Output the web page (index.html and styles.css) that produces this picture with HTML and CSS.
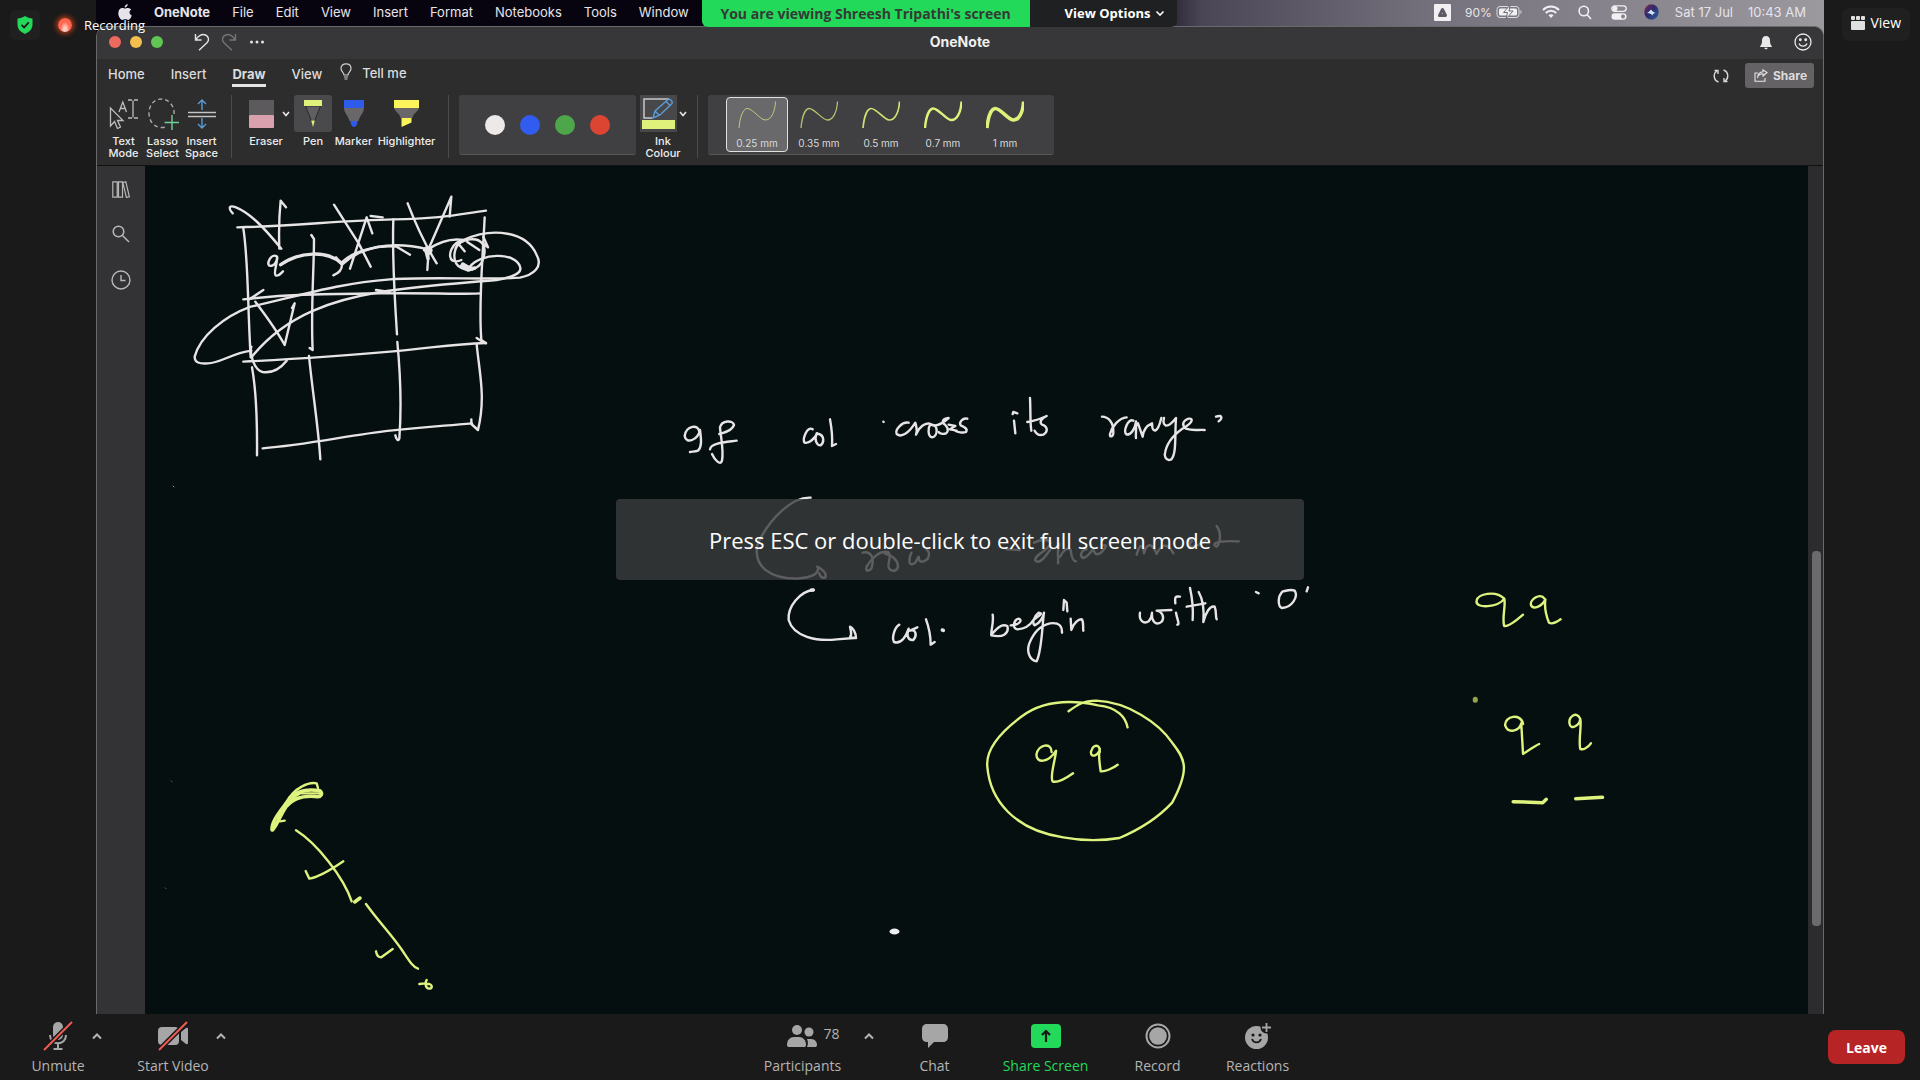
FILE: index.html
```html
<!DOCTYPE html>
<html lang="en">
<head>
<meta charset="utf-8">
<title>Meeting – shared screen</title>
<link rel="stylesheet" href="styles.css">
</head>
<body>
<div class="meeting">
  <main class="stage">
    <aside class="rail rail-left">
      <button class="shield" aria-label="Meeting is encrypted">
        <svg width="18" height="20" viewBox="0 0 18 20"><path d="M9 1c2.300 1.600 4.700 2.400 7.500 2.600v6c0 4.500-3 7.400-7.500 9.400-4.500-2-7.500-4.900-7.500-9.400v-6C4.300 3.400 6.700 2.600 9 1z" fill="#23d959"/><path d="M5.500 9.800l2.600 2.600 4.700-5" fill="none" stroke="#1a1a1a" stroke-width="1.800"/></svg>
      </button>
      <span class="rec-dot"></span>
      <span class="rec-label">Recording</span>
    </aside>

    <section class="shared">
      <nav class="menubar">
        <div class="menus">
          <button class="apple" aria-label="Apple menu"><svg width="14" height="17" viewBox="0 0 14 17" fill="#e6e4ea"><path d="M9.700 0c.2 1.700-1.300 3.600-3 3.500C6.500 1.900 8 .2 9.700 0zM7 4.600c.7 0 1.700-.8 3.200-.7 1.200.1 2.300.6 3 1.600-2.500 1.600-2.100 4.900.6 6-.7 1.900-2 4.400-3.600 4.400-1.100 0-1.500-.7-2.900-.7s-1.900.7-2.900.7C2.600 16 .3 12.500.3 9.200c0-3.300 2-5.200 4.100-5.200 1.200 0 2 .6 2.600.6z"/></svg></button>
          <button class="bold">OneNote</button><button>File</button><button>Edit</button><button>View</button><button>Insert</button><button>Format</button><button>Notebooks</button><button>Tools</button><button>Window</button>
        </div>
        <div class="banner">
          <span class="viewing">You are viewing Shreesh Tripathi's screen</span>
          <button class="view-options">View Options <svg width="10" height="7" viewBox="0 0 10 7" fill="none" stroke="#fff" stroke-width="1.600"><path d="M1.500 1.500L5 5l3.500-3.500"/></svg></button>
        </div>
        <div class="status">
          <svg class="drive" width="17" height="17" viewBox="0 0 17 17"><rect width="17" height="17" rx="1" fill="#f1f0f3"/><path d="M8.500 5.500l3 6h-6z" fill="none" stroke="#5d5a64" stroke-width="3" stroke-linejoin="round"/></svg>
          <span class="battery-pct">90%</span>
          <svg class="battery" width="27" height="14" viewBox="0 0 27 14"><rect x="1" y="1.500" width="22" height="11" rx="3" fill="none" stroke="#dcdae0" /><rect x="3" y="3.500" width="18" height="7" rx="1.500" fill="#f1f0f3"/><path d="M14 0L7.500 7.500h4L10 14l7-8h-4z" fill="#f1f0f3" stroke="#6f6c76"/><path d="M24.500 5v4c1.500-.5 1.500-3.500 0-4z" fill="#dcdae0"/></svg>
          <svg class="wifi" width="18" height="14" viewBox="0 0 18 14" fill="none" stroke="#f1f0f3" stroke-width="2"><path d="M1 5c4.600-4.600 11.400-4.600 16 0M3.800 8c3-3 7.400-3 10.400 0"/><path d="M6.500 10.200c1.500-1.400 3.500-1.400 5 0L9 13z" fill="#f1f0f3" stroke="none"/></svg>
          <svg class="lens" width="14" height="15" viewBox="0 0 14 15" fill="none" stroke="#f1f0f3" stroke-width="1.600"><circle cx="5.800" cy="6" r="4.700"/><path d="M9 9.500l4 4.500"/></svg>
          <svg class="control" width="16" height="15" viewBox="0 0 16 15"><rect x=".8" y=".8" width="14.400" height="5.600" rx="2.800" fill="none" stroke="#f1f0f3" stroke-width="1.300"/><circle cx="4" cy="3.600" r="2.500" fill="#f1f0f3"/><rect x=".5" y="8.300" width="15" height="6.500" rx="3.200" fill="#f1f0f3"/><circle cx="12" cy="11.500" r="2" fill="#85828b"/></svg>
          <svg class="siri" width="15" height="16" viewBox="0 0 15 16"><defs><linearGradient id="siri" x1="0" y1="0" x2="1" y2="1"><stop offset="0" stop-color="#8a2350"/><stop offset=".45" stop-color="#2b2a6a"/><stop offset="1" stop-color="#2e63a8"/></linearGradient></defs><ellipse cx="7.500" cy="8" rx="7.200" ry="7.700" fill="url(#siri)"/><path d="M3 9c2-1 3-2.500 4-3.500 1 1.500 2.500 2.500 4.500 3.500-2 0-2.500 1-3 2.500-1-1.500-3-2.500-5.500-2.500z" fill="#cfe4f5"/></svg>
          <span class="clock"><span>Sat 17 Jul</span><span>10:43 AM</span></span>
        </div>
      </nav>

      <div class="window">
        <header class="titlebar">
          <div class="title-left">
            <span class="light red"></span><span class="light amber"></span><span class="light green"></span>
            <button class="undo" aria-label="Undo"><svg width="16" height="18" viewBox="0 0 16 18" fill="none" stroke="#e4e4e4" stroke-width="1.400"><path d="M1.500 1v6h6M1.800 6.800C4 2.500 8 .6 11.500 2c3.600 1.800 3.800 5.300 1.500 7.800L5 17.300"/></svg></button>
            <button class="redo" aria-label="Redo"><svg width="16" height="18" viewBox="0 0 16 18" fill="none" stroke="#747476" stroke-width="1.400"><path d="M14.500 1v6h-6M14.200 6.800C12 2.500 8 .6 4.500 2 .9 3.800.7 7.300 3 9.800l8 7.500"/></svg></button>
            <button class="more" aria-label="More"><svg width="16" height="4" viewBox="0 0 16 4" fill="#e4e4e4"><circle cx="2.500" cy="2" r="1.500"/><circle cx="8" cy="2" r="1.500"/><circle cx="13.500" cy="2" r="1.500"/></svg></button>
          </div>
          <h1 class="app-title">OneNote</h1>
          <div class="title-right">
            <button aria-label="Notifications"><svg width="14" height="15" viewBox="0 0 14 15" fill="#e8e8e8"><path d="M7 1c2.500 0 4 1.800 4 4.200 0 3 .4 4.500 1.800 5.800v1H1.200v-1C2.600 9.700 3 8.200 3 5.200 3 2.800 4.500 1 7 1zM5.300 12.800h3.400c-.3 2-3.100 2-3.400 0z"/></svg></button>
            <button aria-label="Feedback"><svg width="18" height="18" viewBox="0 0 18 18" fill="none" stroke="#e8e8e8" stroke-width="1.300"><circle cx="9" cy="9" r="8"/><path d="M5 10.500c1.500 3.500 6.500 3.500 8 0"/><circle cx="6.300" cy="6.800" r=".8" fill="#e8e8e8"/><circle cx="11.700" cy="6.800" r=".8" fill="#e8e8e8"/></svg></button>
          </div>
        </header>

        <div class="tabs">
          <button class="tab">Home</button><button class="tab">Insert</button><button class="tab active">Draw</button><button class="tab">View</button>
          <button class="tab tell"><svg width="12" height="17" viewBox="0 0 12 17" fill="none" stroke="#d0d0d0" stroke-width="1.200"><path d="M4 12c0-2.500-3-3.300-3-6.500C1 2.600 3.200.8 6 .8s5 1.800 5 4.700C11 8.700 8 9.500 8 12zM4 14h4M4.500 16h3"/></svg>Tell me</button>
          <div class="tabs-right">
            <button aria-label="Sync"><svg width="16" height="16" viewBox="0 0 16 16" fill="none" stroke="#d8d8d8" stroke-width="1.400"><path d="M5.500 14C0 12 .2 5.500 4 2.800M10.500 2C16 4 15.800 10.500 12 13.200"/><path d="M1.500 2.500h3.500v3.500M14.500 13.500H11V10"/></svg></button>
            <button class="share"><svg width="14" height="13" viewBox="0 0 14 13" fill="none" stroke="#e6e6e6" stroke-width="1.100"><path d="M4 4H1v8.300h10V9M3.500 9C4 6 6 4.800 9 4.800V7l4-3.500L9 .8v2C5.500 3 3.800 5.500 3.500 9z"/></svg>Share</button>
          </div>
        </div>

        <div class="ribbon">
          <div class="group">
            <button class="tool"><span class="glyph"><svg width="30" height="30" viewBox="0 0 30 30" fill="none" stroke="#bdbdbd" stroke-width="1.300"><path d="M1.500 9v18l4-4.500 3 7 3-1.500-3-6.500h5.500zM10 13l3.800-10L17.500 13M11.200 9.500h5"/><path d="M19 1h4M25 1h4M19 19h4M25 19h4M24 1.500v17" /></svg></span>Text<br>Mode</button>
            <button class="tool"><span class="glyph"><svg width="32" height="32" viewBox="0 0 32 32" fill="none" stroke-width="1.400"><path d="M27 16C28 9 22 1 14.500 1 7 1 2 7 2 15.500 2 23 7 29.500 15 29.500c2.500 0 4-.5 5-1.500" stroke="#a9a9a9" stroke-dasharray="4 3"/><path d="M17.500 24.500H32M25 17v15" stroke="#6fcf97"/></svg></span>Lasso<br>Select</button>
            <button class="tool"><span class="glyph"><svg width="28" height="30" viewBox="0 0 28 30" fill="none" stroke-width="1.400"><path d="M0 13.500h28M0 17.500h28" stroke="#c4c4c4"/><path d="M14 11V1M10 5l4-4 4 4M14 19v10M10 25l4 4 4-4" stroke="#5b9bd8"/></svg></span>Insert<br>Space</button>
          </div>
          <span class="sep"></span>
          <div class="group">
            <button class="tool split"><span class="split-row"><span class="split-tile"><svg width="25" height="28" viewBox="0 0 25 28"><rect width="25" height="15" fill="#5d5a5e"/><rect y="15" width="25" height="13" rx="1" fill="#d9a0ae"/></svg></span><svg width="8" height="6" viewBox="0 0 8 6" fill="none" stroke="#e6e6e6" stroke-width="1.600"><path d="M1 1l3 3.500L7 1"/></svg></span>Eraser</button>
            <button class="tool pen"><span class="glyph picked"><svg width="20" height="28" viewBox="0 0 20 28"><path d="M2.500 6h15L11.500 21h-3z" fill="#605e61" stroke="#29292a"/><rect x="1" width="18" height="6" fill="#dff17b"/><path d="M8.200 20.500h3.600L10 27z" fill="#dff17b"/></svg></span>Pen</button>
            <button class="tool marker"><span class="glyph"><svg width="20" height="28" viewBox="0 0 20 28"><path d="M0 8h20c0 5-4 7-5.500 13h-9C4 15 0 13 0 8z" fill="#69676a"/><rect width="20" height="8" fill="#2f5bea"/><path d="M6.500 21h7c0 3-1.500 6-3.500 6s-3.500-3-3.500-6z" fill="#2f5bea"/></svg></span>Marker</button>
            <button class="tool highlighter"><span class="glyph"><svg width="25" height="28" viewBox="0 0 25 28"><path d="M0 8h25c-1 4-6 5-6.500 10h-12C6 13 1 12 0 8z" fill="#69676a"/><rect width="25" height="8" fill="#fbf45b"/><path d="M7.500 18h10v4.500L7.500 27z" fill="#fbf45b"/></svg></span>Highlighter</button>
          </div>
          <span class="sep"></span>
          <div class="panel colours">
            <button class="swatch white" aria-label="White"></button><button class="swatch blue" aria-label="Blue"></button><button class="swatch green" aria-label="Green"></button><button class="swatch red" aria-label="Red"></button>
          </div>
          <button class="tool split ink"><span class="split-row"><span class="split-tile filled"><svg width="33" height="31" viewBox="0 0 33 31" fill="none"><path d="M27 1H2v19h8" stroke="#c8c8c8" stroke-width="1.500"/><path d="M11 20l2-7L26 1.500c2-1 5 1.500 4 4L18 17z M13 13l4.500 4.500M24 3.500l4.500 4.500" stroke="#5b9bd8" stroke-width="1.400"/><rect y="22" width="33" height="9" fill="#dff17b"/></svg></span><svg width="8" height="6" viewBox="0 0 8 6" fill="none" stroke="#e6e6e6" stroke-width="1.600"><path d="M1 1l3 3.500L7 1"/></svg></span>Ink<br>Colour</button>
          <span class="sep"></span>
          <div class="panel widths">
            <button class="nib selected"><svg viewBox="0 0 38 28" stroke="#bfca80" stroke-width="1"><path d="M1 27C2 16 5 8 9 7.500c5-.5 13 11 18 11.500 6 .5 10-8 10.500-18.500"/></svg>0.25 mm</button>
            <button class="nib"><svg viewBox="0 0 38 28" stroke="#b5c070" stroke-width="1.300"><path d="M1 27C2 16 5 8 9 7.500c5-.5 13 11 18 11.500 6 .5 10-8 10.500-18.500"/></svg>0.35 mm</button>
            <button class="nib"><svg viewBox="0 0 38 28" stroke="#d0e075" stroke-width="1.700"><path d="M1 27C2 16 5 8 9 7.500c5-.5 13 11 18 11.500 6 .5 10-8 10.500-18.500"/></svg>0.5 mm</button>
            <button class="nib"><svg viewBox="0 0 38 28" stroke="#dff17b" stroke-width="2.400"><path d="M1 27C2 16 5 8 9 7.500c5-.5 13 11 18 11.500 6 .5 10-8 10.500-18.500"/></svg>0.7 mm</button>
            <button class="nib"><svg viewBox="0 0 38 28" stroke="#dff17b" stroke-width="3.500"><path d="M1 27C2 16 5 8 9 7.500c5-.5 13 11 18 11.500 6 .5 10-8 10.500-18.500"/></svg>1 mm</button>
          </div>
        </div>

        <div class="workspace">
          <nav class="sidebar">
            <button aria-label="Notebooks"><svg width="18" height="17" viewBox="0 0 18 17" fill="none" stroke="#b8b8b8" stroke-width="1.200"><path d="M.8.800h4.400v15.400H.8zM6.500.8h4v15.400h-4zM10.800 1.500l3-.7 3.600 15-3 .6z"/></svg></button>
            <button aria-label="Search"><svg width="18" height="18" viewBox="0 0 18 18" fill="none" stroke="#b8b8b8" stroke-width="1.500"><circle cx="6.500" cy="6.500" r="5.300"/><path d="M10.500 10.500l6.500 6.500"/></svg></button>
            <button aria-label="Recent"><svg width="20" height="20" viewBox="0 0 20 20" fill="none" stroke="#b8b8b8" stroke-width="1.400"><circle cx="10" cy="10" r="9"/><path d="M10 5v5.500h4.500"/></svg></button>
          </nav>

          <div class="page">
            <svg class="inkwork" viewBox="0 0 1663 848" preserveAspectRatio="xMinYMin meet" role="img" aria-label="Handwritten notes">
              <!-- grid sketch -->
              <g class="white-ink" transform="translate(-55 -6) scale(.33333)">
                <path d="M442 202C600 200 760 180 910 178S1110 162 1188 152"/>
                <path d="M460 205C475 300 472 420 482 592M486 622C500 700 502 780 501 886"/>
                <path d="M664 225l8 12C672 330 662 450 668 570l-9-6M657 588C668 700 685 800 691 898"/>
                <path d="M910 178C906 300 915 430 921 523M922 546C932 650 935 740 928 836c-4 10-10 0-12-10"/>
                <path d="M1184 172C1178 300 1165 430 1174 540l14 10M1160 552C1168 640 1188 710 1164 810l-20-18v-14"/>
                <path d="M460 418C600 402 700 402 870 400S1080 404 1172 400"/>
                <path d="M460 605C640 596 760 588 900 575S1090 552 1188 549M1160 534l22 14"/>
                <path d="M518 865C650 855 780 825 900 812S1060 798 1146 790"/>
                <path d="M428 160c-16-20-8-24 10-18 40 16 80 56 136 124M568 266C566 210 568 160 572 122l16 20"/>
                <path d="M732 134L806 250 842 320M780 326L830 172l17 48M842 168l36 4"/>
                <path d="M953 130C980 200 1000 245 1040 310M1084 110L1012 275M1084 110l-5 60M1012 330l4-60"/>
                <path d="M562 296c0-12-14-12-22 0-10 16-4 26 8 20 12-4 14-22 13-26 2 20-12 50-4 56 8 4 16-6 22-12"/>
                <path class="thick" d="M572 314C630 275 710 270 755 310"/>
                <path d="M738 292l18 22c0 14-12 26-26 32M756 314C810 262 900 240 1014 268"/>
                <path d="M756 306C790 274 860 254 920 260l40 24M1014 268c30-20 70-34 106-28"/>
                <path class="thick" d="M1004 270c6-12 22-6 18 4-4 10-16 6-14-6M1010 280l4 16"/>
                <path d="M1124 242c-40 0-54 50-36 60 10 4 22 0 26-2M1114 240c-28 30-28 70 0 84 30 16 60-4 66-30 10-30 0-60-40-56-20 2-40 14-44 30M1180 230l14 32-30-22M1168 270l-36-24M1104 250l20 24"/>
                <path class="thick" d="M1118 312c14 10 20 12 30 14M1114 318l20 12 20-6"/>
                <path d="M1120 240C1210 200 1310 215 1340 285c20 36-10 60-50 68C1200 360 1020 350 900 358 740 370 620 410 482 440 400 470 330 530 314 590c0 18 14 22 40 20 36 0 70-30 130-38"/>
                <path d="M1140 320c30-40 136-46 150 0 8 20-26 32-70 40C1080 372 1000 376 870 396 740 418 590 460 486 590"/>
                <path d="M478 418l42-28M496 425C530 470 560 510 584 555L614 430l-8 14"/>
                <path d="M484 560c-6 20 8 70 34 76 30 4 56-14 72-34M858 390l40 6"/>
              </g>
              <!-- notes in the middle of the page, left half -->
              <g class="white-ink" transform="translate(525 224) scale(.33333)">
                <path d="M88 128C88 100 48 106 44 138 48 164 84 150 90 120 94 150 96 170 84 182 74 186 66 184 60 186"/>
                <path d="M148 132C160 128 185 125 192 105 190 90 155 90 150 112 152 140 162 180 156 212 152 228 134 210 126 192M120 178C122 158 170 156 200 152"/>
                <path d="M428 118C412 106 396 148 404 158 418 162 434 144 442 130M440 130C432 150 440 166 452 166 464 156 462 136 446 132M480 88C484 110 488 140 486 168l12-6M640 95l1 1"/>
                <path d="M716 98C696 94 674 120 680 132 694 144 716 130 736 98 740 112 742 124 738 134 746 112 766 96 782 102 774 112 772 138 786 142 804 140 806 104 784 104"/>
                <path d="M784 104C800 112 818 100 836 84 826 84 816 90 818 98 830 106 840 120 828 130 818 134 808 130 806 126M892 86C878 82 866 98 872 106 884 110 894 118 888 126 878 130 862 126 856 122M836 104l20 4-16 10 20 4"/>
                <path d="M422 323C370 320 300 380 262 464 250 530 300 566 380 566 430 562 446 550 444 534l-2-4C460 540 470 552 466 562 456 566 450 560 448 550"/>
                <path d="M578 488C600 482 616 500 604 536 592 548 586 540 590 530 604 504 628 486 642 486 664 480 660 500 656 520 650 545 680 550 684 530 684 508 664 496 644 490M724 488C712 520 720 530 736 518 742 508 744 500 746 500 746 514 752 522 772 508 778 498 780 484 770 480"/>
                <path d="M430 600C390 604 352 650 356 690 370 740 440 755 500 748l52-4M540 710C542 726 548 730 540 742L558 744C558 728 548 712 540 710"/>
                <path d="M688 704C676 710 664 740 672 756 690 762 704 750 716 716M716 716C708 740 716 752 730 750 742 736 738 716 720 722l22-10M768 688C776 710 782 740 782 764l12-8"/>
                <path class="thick" d="M817 720l3 1M424 600l6 0"/>
              </g>
              <!-- right half -->
              <g class="white-ink" transform="translate(815 224) scale(.33333)">
                <path d="M162 92L166 130M158 72l2-6 12 4M210 24C212 60 210 100 214 122M202 96C224 92 240 88 260 78 246 84 236 96 246 104 262 108 266 124 250 134 236 138 228 130 224 122"/>
                <path d="M426 80C444 80 462 96 460 130 458 142 448 142 450 132 456 110 476 84 500 82M520 92C504 84 488 124 500 134 516 134 526 112 528 94 530 120 526 134 528 144M534 100l14 40C550 120 562 106 576 100 578 112 574 120 586 122 596 118 600 100 604 84"/>
                <path d="M612 84C606 108 620 120 648 84 644 140 650 190 634 208 616 216 612 196 616 184 624 150 650 126 680 108 698 96 700 84 686 86 668 92 664 106 678 116 700 124 716 118 734 120M768 80C790 72 786 88 776 94"/>
                <path d="M140 478l40 2M222 458C240 448 270 446 272 460 268 480 220 495 226 512 240 526 262 490 270 480M294 520C296 500 290 480 298 462M300 500C310 480 324 470 332 480 334 500 340 514 348 514"/>
                <path d="M380 478C362 480 358 500 370 504 384 502 392 484 400 478 406 500 420 494 430 480 440 470 440 464 432 466M530 494C540 460 548 460 552 490 560 460 575 455 590 492 600 470 620 450 640 490M690 460C705 450 690 440 684 456 688 480 710 470 740 450M770 408C786 430 780 460 770 470 754 464 760 450 836 454"/>
                <path d="M98 674C102 700 92 720 94 736 130 744 148 730 142 708 124 700 110 716 98 730M152 706C176 706 190 690 176 686 160 690 156 716 172 718 200 716 214 700 220 690 240 676 250 670 236 668 220 680 216 700 224 706 240 700 250 680 252 668 246 710 246 780 230 814 206 810 200 780 208 760 220 730 240 706 270 700 300 696 306 710 306 728M310 660L312 630 320 638 322 664M332 686l2 34C340 700 356 686 366 688 372 700 368 712 370 722"/>
                <path d="M540 668C536 690 550 704 566 694 574 684 576 672 576 668 574 690 586 712 606 694 614 680 606 664 590 662l44-2M648 668C652 690 660 704 652 704M646 640C644 620 646 618 660 620M690 594C698 630 700 660 698 690M680 650L736 640M716 606C730 630 732 670 730 696 736 670 750 645 764 650 770 665 766 680 770 688"/>
                <path d="M888 606l8 4M966 606C952 622 954 650 966 654 996 652 1016 620 1004 602 990 596 976 604 968 604M1044 592l-4 12"/>
              </g>
              <!-- green letters and the ringed pair -->
              <g class="green-ink" transform="translate(795 404) scale(.44643 .33333)">
                <path d="M420 472c-4-30-22-60-66-66-70-20-130-8-172 34-50 50-80 100-76 150 6 100 60 190 170 212 40 10 90 10 126 2 60-34 100-80 118-106 40-100 30-130 0-180-30-60-100-122-170-126-30 0-44 14-62 32"/>
                <path d="M250 546c0-30-30-24-34 8 0 26 26 26 44-12-2 30-14 76-8 92 10 6 32-10 46-24M358 546c0-24-14-26-20 0 0 20 18 10 20-10-4 20 0 50 2 68 10 2 28-10 38-20"/>
                <path d="M1264 86c-20-26-60-14-62 6-4 26 50 20 62-6 4 20-6 60 0 82 8 4 30-20 42-34M1354 86c-10-20-34 4-30 20 4 12 24 6 32-18-2 20 2 50 8 70 8 6 18-2 26-10"/>
                <path d="M1306 462c-4-34-42-24-40 4 6 26 32 18 36-6l4 92c10-8 26-24 36-30M1434 446c-8-24-26-6-24 14 2 24 24 4 24-14 4 20-4 60 0 90 6 6 18-4 24-16"/>
                <path class="thick" d="M1284 695l66 3 8-10M1424 686l60-4"/>
                <path class="dot" d="M1199 388l0 3"/>
              </g>
              <!-- broken stroke, lower left -->
              <g class="green-ink" transform="translate(-15 594) scale(.33333)">
                <path class="thick" d="M426 210c-2-30 30-60 54-98 30-24 60-24 90-20 10 10 2 18-6 18-60-6-80 14-96 30-20 30-20 44-40 70z"/>
                <path d="M470 130c20-50 70-64 90-60l4 14M440 190c12-34 40-74 70-90l60 0M450 184l14-2"/>
                <path d="M498 211C560 250 640 350 665 424M527 333l11 23c30-4 70-30 102-52M738 574c2 12 6 18 16 18l34-25"/>
                <path class="thick" d="M674 426l16-12"/>
                <path d="M708 432C750 490 790 530 820 576c20 30 30 46 44 50"/>
                <path d="M868 672l18-2 4-10c-6 8-4 24 6 26 12 0 12-10 2-14l-12 0"/>
                <path class="speck" d="M124 63l1 1M106 384l1 1"/>
              </g>
              <g class="white-ink"><ellipse cx="749.500" cy="765.500" rx="5" ry="3" fill="#eee"/><path class="speck" d="M28 320l1 1"/></g>
            </svg>
          </div>
          <div class="scroll"><span class="thumb"></span></div>
        </div>
      </div>
      <p class="toast">Press ESC or double-click to exit full screen mode</p>
    </section>

    <aside class="rail rail-right">
      <button class="view-btn"><svg width="14" height="14" viewBox="0 0 14 14" fill="#e0e0e0"><rect width="4" height="4" rx="1"/><rect x="5" width="4" height="4" rx="1"/><rect x="10" width="4" height="4" rx="1"/><rect y="5" width="14" height="9" rx="1"/></svg>View</button>
    </aside>
  </main>

  <footer class="controls">
    <div class="ctl-group first">
      <button class="ctl unmute"><span class="ctl-icon"><svg width="30" height="30" viewBox="0 0 30 30" fill="none" stroke="#a6a6a6" stroke-width="2"><rect x="10" y="1" width="10" height="18" rx="5" fill="#a6a6a6" stroke="none"/><path d="M7 14c0 11 16 11 16 0M15 22v5M10.500 28h9"/><path d="M1 29L29 1" stroke="#1a1a1a" stroke-width="5"/><path d="M1 29L29 1" stroke="#f25a54"/></svg></span>Unmute</button>
      <button class="caret" aria-label="Audio options"><svg width="10" height="7" viewBox="0 0 10 7"><path d="M1 5.500l4-4 4 4"/></svg></button>
      <button class="ctl video"><span class="ctl-icon"><svg width="32" height="30" viewBox="0 0 32 30" fill="#a6a6a6"><rect x="1" y="6" width="21" height="18" rx="4"/><path d="M24 11l5-4c1-.5 2 0 2 1v14c0 1-1 1.500-2 1l-5-4z"/><path d="M2 29L30 1" stroke="#1a1a1a" stroke-width="5"/><path d="M2 29L30 1" stroke="#f25a54" stroke-width="2"/></svg></span>Start Video</button>
      <button class="caret" aria-label="Video options"><svg width="10" height="7" viewBox="0 0 10 7"><path d="M1 5.500l4-4 4 4"/></svg></button>
    </div>
    <div class="ctl-group">
      <button class="ctl people"><span class="ctl-icon"><svg width="30" height="24" viewBox="0 0 30 24" fill="#a6a6a6"><circle cx="10" cy="6" r="5"/><path d="M0 21c0-5 3-8 7-8h5c4 0 7 3 7 8 0 1.500-1 2-2 2H2c-1 0-2-.5-2-2z"/><circle cx="22" cy="8" r="4.500"/><path d="M20 15h4c4 0 6 3 6 6 0 1.500-1 2-2 2h-8c1.500-3 1-6 0-8z"/></svg><span class="count">78</span></span>Participants</button>
      <button class="caret" aria-label="Participant options"><svg width="10" height="7" viewBox="0 0 10 7"><path d="M1 5.500l4-4 4 4"/></svg></button>
      <button class="ctl chat"><span class="ctl-icon"><svg width="26" height="24" viewBox="0 0 26 24" fill="#a6a6a6"><path d="M5 0h16c3 0 5 2 5 5v8c0 3-2 5-5 5h-9l-6 6v-6H5c-3 0-5-2-5-5V5c0-3 2-5 5-5z"/></svg></span>Chat</button>
      <button class="ctl share-screen"><span class="ctl-icon"><svg width="30" height="24" viewBox="0 0 30 24"><rect width="30" height="24" rx="4" fill="#23d959"/><path d="M15 18V7M11 11l4-4 4 4" fill="none" stroke="#1a1a1a" stroke-width="2.200"/></svg></span>Share Screen</button>
      <button class="ctl record"><span class="ctl-icon"><svg width="26" height="26" viewBox="0 0 26 26"><circle cx="13" cy="13" r="11.500" fill="none" stroke="#a6a6a6" stroke-width="2"/><circle cx="13" cy="13" r="8.800" fill="#a6a6a6"/></svg></span>Record</button>
      <button class="ctl reactions"><span class="ctl-icon"><svg width="26" height="28" viewBox="0 0 26 28"><circle cx="11.500" cy="15.500" r="11.500" fill="#a6a6a6"/><circle cx="21.500" cy="5.500" r="6" fill="#1a1a1a"/><path d="M21.500 1v9M17 5.500h9" stroke="#a6a6a6" stroke-width="1.800"/><circle cx="8" cy="13" r="1.600" fill="#1a1a1a"/><circle cx="15" cy="13" r="1.600" fill="#1a1a1a"/><path d="M7 17c1.500 4.500 7.500 4.500 9 0" fill="none" stroke="#1a1a1a" stroke-width="1.800"/></svg></span>Reactions</button>
    </div>
    <button class="leave">Leave</button>
  </footer>
</div>
</body>
</html>
```
FILE: styles.css
```css
* { box-sizing: border-box; }

body {
  margin: 0;
  background: #1a1a1a;
  color: #fff;
  font-family: "Open Sans", "Noto Sans", sans-serif;
}

button {
  margin: 0;
  padding: 0;
  border: 0;
  background: none;
  color: inherit;
  font: inherit;
  white-space: nowrap;
}

svg { display: block; flex: none; }

.meeting {
  display: grid;
  grid-template-rows: minmax(0, 1fr) 66px;
  height: 100vh;
  overflow: hidden;
}

.stage {
  display: grid;
  grid-template-columns: 96px minmax(0, 1fr) 96px;
  min-height: 0;
}

/* meeting rails */
.rail-left {
  position: relative;
  z-index: 2;
  display: flex;
  align-items: flex-start;
  padding: 10px 0 0 10px;
}

.shield {
  display: grid;
  flex: none;
  place-items: center;
  width: 30px;
  height: 30px;
  border-radius: 6px;
  background: #202020;
}

.rec-dot {
  flex: none;
  width: 14px;
  height: 14px;
  margin: 8px 12px 0 18px;
  border-radius: 50%;
  background: radial-gradient(ellipse at 50% 80%, #ffc9bd 0 15%, #ff6a55 45%, #ff5540);
  box-shadow: 0 0 5px 2px #a83a17;
}

.rec-label {
  flex: none;
  padding-top: 5px;
  font-size: 13px;
  line-height: 20px;
  white-space: nowrap;
}

.rail-right {
  display: flex;
  justify-content: flex-end;
  align-items: flex-start;
  padding: 8px 10px 0 0;
}

.view-btn {
  display: flex;
  align-items: center;
  gap: 5px;
  height: 33px;
  padding: 0 9px 4px;
  border-radius: 8px;
  background: #202020;
  font-size: 14px;
}

/* shared screen */
.shared {
  position: relative;
  display: flex;
  flex-direction: column;
  min-width: 0;
  font-family: Inter, "Liberation Sans", sans-serif;
  background: linear-gradient(90deg, #08040f 60%, #4a4656 64%, #77737e 78%, #9b989e);
}

.menubar {
  display: flex;
  flex: none;
  align-items: flex-start;
  height: 26px;
  font-size: 13px;
  color: #e6e4ea;
}

.menus {
  display: flex;
  align-items: center;
  gap: 22px;
  height: 24px;
  padding-left: 22px;
}

.bold { font-weight: 700; }

.banner {
  z-index: 2;
  display: flex;
  height: 27px;
  margin-left: 13px;
  border-radius: 0 0 6px 6px;
  overflow: hidden;
  background: #1f2021;
  font: 700 14px/27px "Open Sans", "Noto Sans", sans-serif;
}

.viewing {
  width: 328px;
  background: #23d959;
  color: #343a36;
  text-align: center;
}

.view-options {
  display: flex;
  align-items: center;
  gap: 5px;
  padding: 0 12px 0 35px;
  color: #fff;
  font-size: 13px;
}

.status {
  display: flex;
  align-items: center;
  height: 24px;
  margin-left: auto;
  padding-right: 18px;
}

.battery-pct { margin: 0 4px 0 14px; font-size: 12px; }
.wifi { margin: 0 18px 0 19px; }
.lens { margin-right: 19px; }
.control { margin-right: 17px; }
.siri { margin-right: 16px; }
.clock { display: flex; gap: 15px; }

/* app window */
.window {
  display: flex;
  flex: 1;
  flex-direction: column;
  min-height: 0;
  border: 1px solid #69696b;
  border-bottom: 0;
  border-radius: 10px 10px 0 0;
  overflow: hidden;
  background: #2d2d2d;
}

.titlebar {
  display: grid;
  flex: none;
  grid-template-columns: 1fr auto 1fr;
  align-items: center;
  height: 32px;
  padding-bottom: 2px;
  background: #373739;
}

.title-left { display: flex; align-items: center; padding-left: 12px; }

.light {
  width: 12px;
  height: 12px;
  margin-right: 9px;
  border-radius: 50%;
}

.light.red { background: #ed6a5e; }
.light.amber { background: #f4bf4f; }
.light.green { background: #61c554; }
.undo { margin-left: 22px; }
.redo { margin-left: 11px; }
.more { margin-left: 12px; }

.app-title {
  margin: 0;
  font-size: 14px;
  line-height: 20px;
  font-weight: 700;
  color: #f0f0f0;
}

.title-right {
  display: flex;
  align-items: center;
  justify-content: flex-end;
  gap: 21px;
  padding-right: 11px;
}

.tabs {
  display: flex;
  flex: none;
  align-items: flex-start;
  gap: 26px;
  height: 36px;
  padding: 4px 9px 0 11px;
  font-size: 13px;
  font-weight: 500;
  color: #dcdcdc;
}

.tab { height: 24px; line-height: 20px; border-bottom: 3px solid transparent; }
.tab.active { border-color: #e4e4e4; font-weight: 700; }
.tab.tell { display: flex; gap: 10px; margin-left: -8px; }

.tabs-right {
  display: flex;
  align-items: center;
  gap: 16px;
  margin-left: auto;
}

.share {
  display: flex;
  align-items: center;
  gap: 5px;
  width: 69px;
  height: 25px;
  padding-left: 9px;
  border-radius: 3px;
  background: #646265;
  font-size: 12px;
  font-weight: 700;
}

.ribbon {
  display: flex;
  flex: none;
  align-items: flex-start;
  height: 71px;
  padding-left: 7px;
  border-bottom: 1px solid #101212;
  font-size: 11px;
  line-height: 12px;
  color: #ededed;
}

.group { display: flex; }

.tool {
  display: flex;
  flex-direction: column;
  align-items: center;
  width: 39px;
  line-height: 12px;
  text-align: center;
  font-weight: 500;
}

.glyph {
  display: grid;
  place-items: center;
  width: 38px;
  height: 37px;
  margin-bottom: 3px;
}

.picked { border-radius: 3px; background: #4a4a4c; }

.sep {
  width: 1px;
  height: 63px;
  margin: 0 10px;
  background: #4b4b4b;
}

.pen { width: 38px; margin-left: 4px; }
.marker { width: 43px; }
.highlighter { width: 63px; }

.split { width: 48px; }
.split-row { display: flex; align-items: center; gap: 2px; height: 37px; margin-bottom: 3px; }
.split-tile { display: grid; place-items: center; width: 37px; height: 37px; }
.filled { background: #48484a; }
.ink { margin-left: 3px; }

.panel {
  display: flex;
  height: 60px;
  border-radius: 3px;
  background: #403f41;
  border-bottom: 1px solid #575658;
}

.colours {
  align-items: center;
  justify-content: space-between;
  width: 177px;
  padding: 0 26px;
}

.swatch { width: 20px; height: 20px; border-radius: 50%; }
.swatch.white { background: #ece9e8; }
.swatch.blue { background: #325cf0; }
.swatch.green { background: #4ea64a; }
.swatch.red { background: #dc4532; }

.widths { padding: 2px 18px 0; }

.nib {
  display: flex;
  flex-direction: column;
  align-items: center;
  gap: 9px;
  width: 62px;
  height: 55px;
  padding-top: 3px;
  border: 1px solid transparent;
  border-radius: 4px;
  font-size: 10px;
  line-height: 10px;
  color: #dadada;
}

.nib svg { width: 38px; height: 28px; fill: none; }
.nib.selected { border-color: #e0e0e0; background: #69686a; }

/* notebook page */
.workspace {
  display: grid;
  flex: 1;
  grid-template-columns: 48px minmax(0, 1fr) 15px;
  min-height: 0;
}

.sidebar {
  display: flex;
  flex-direction: column;
  align-items: center;
  gap: 27px;
  padding-top: 15px;
  background: #333234;
}

.page { min-width: 0; min-height: 0; overflow: hidden; background: #060f10; }
.inkwork { width: 100%; }

.inkwork path {
  fill: none;
  stroke-width: 2.400px;
  stroke-linecap: round;
  stroke-linejoin: round;
  vector-effect: non-scaling-stroke;
}

.white-ink path { stroke: #e6e4e5; }
.green-ink path { stroke: #def37e; }
.inkwork .thick { stroke-width: 3.500px; }
.inkwork .dot { stroke: #94a549; stroke-width: 5px; }
.inkwork .speck { stroke: #8c9092; stroke-width: 1px; }

.scroll { padding: 385px 2px 0 4px; background: #2c2b2e; }
.thumb { display: block; height: 375px; border-radius: 4px; background: #6b6a6c; }

.toast {
  position: absolute;
  top: 499px;
  left: 50%;
  width: 688px;
  height: 81px;
  margin: 0 0 0 -344px;
  border-radius: 4px;
  background: rgba(59, 60, 61, 0.8);
  font: 22px/83px "Open Sans", "Noto Sans", sans-serif;
  text-align: center;
  white-space: nowrap;
}

/* meeting controls */
.controls {
  display: flex;
  align-items: flex-start;
  justify-content: space-between;
  padding: 7px 15px 0 26px;
  color: #b4b4b4;
  font-size: 14px;
}

.ctl-group { display: flex; align-items: flex-start; }
.ctl-group.first { margin-right: 3px; }

.ctl {
  display: flex;
  flex-direction: column;
  align-items: center;
  line-height: 20px;
}

.ctl-icon {
  display: flex;
  align-items: center;
  justify-content: center;
  height: 30px;
  margin-bottom: 5px;
}

.unmute { width: 64px; }
.video { width: 82px; margin-left: 28px; }
.people { width: 82px; }
.people .ctl-icon { gap: 6px; padding-left: 22px; }
.count { margin-top: -4px; }
.chat { width: 54px; margin-left: 32px; }
.share-screen { width: 104px; margin-left: 32px; color: #23d959; }
.record { width: 56px; margin-left: 32px; }
.reactions { width: 80px; margin-left: 32px; }

.caret { display: grid; place-items: center; width: 14px; height: 30px; }
.people + .caret { margin-left: 18px; }
.caret path { fill: none; stroke: #b4b4b4; stroke-width: 2px; }

.leave {
  width: 77px;
  height: 34px;
  margin-top: 9px;
  border-radius: 8px;
  background: #b72425;
  color: #fff;
  font-weight: 700;
}
```
